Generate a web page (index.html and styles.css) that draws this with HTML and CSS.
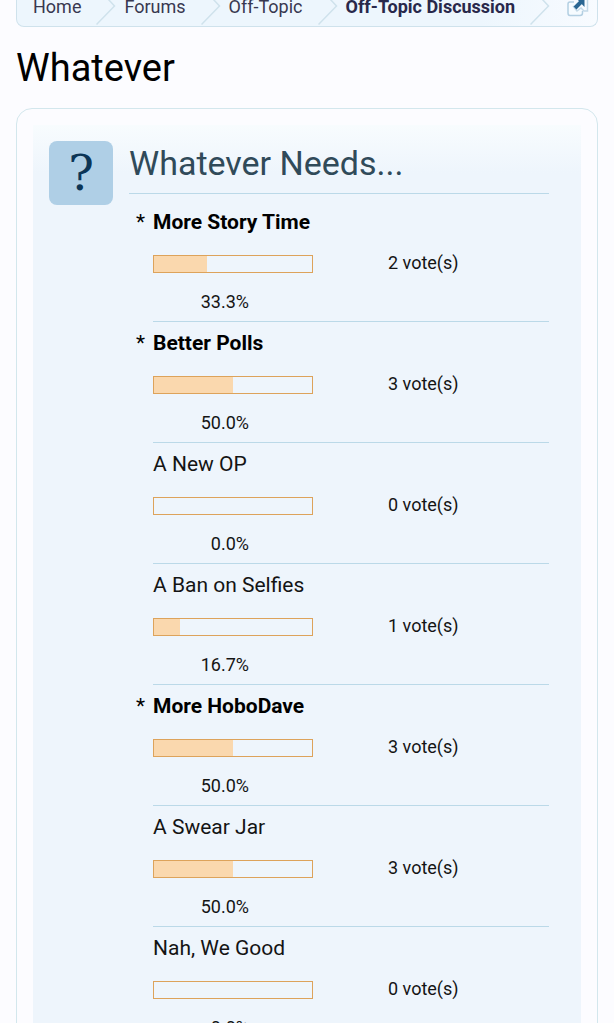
FILE: index.html
```html
<!DOCTYPE html>
<html lang="en">
  <head>
    <meta charset="UTF-8" />
    <meta name="viewport" content="width=device-width,initial-scale=1.0" />
    <title>Whatever</title>
    <link rel="stylesheet" href="styles.css">
  </head>
  <body>
    <nav class="breadcrumb" aria-label="Breadcrumb">
      <div class="crumb">
        <a href="#">Home</a>
        <svg class="arrow" width="20" height="26" viewBox="0 0 20 26"><path d="M12 -1 L18.500 6 L0.500 24.500" /></svg>
      </div>
      <div class="crumb">
        <a href="#">Forums</a>
        <svg class="arrow" width="20" height="26" viewBox="0 0 20 26"><path d="M12 -1 L18.500 6 L0.500 24.500" /></svg>
      </div>
      <div class="crumb">
        <a href="#">Off-Topic</a>
        <svg class="arrow" width="20" height="26" viewBox="0 0 20 26"><path d="M12 -1 L18.500 6 L0.500 24.500" /></svg>
      </div>
      <div class="crumb current">
        <a href="#">Off-Topic Discussion</a>
        <svg class="arrow" width="20" height="26" viewBox="0 0 20 26"><path d="M12 -1 L18.500 6 L0.500 24.500" /></svg>
      </div>
      <a class="jump" href="#" aria-label="Open quick navigation">
        <svg width="22" height="18" viewBox="0 0 22 18">
          <path d="M7 2 H3 Q1 2 1 4 V13 Q1 15.500 3 15.500 H13 Q15.500 15.500 15.500 13 V11" fill="#f6fbff" stroke="#b3cfe2" stroke-width="1.500" />
          <path d="M6 6 L10 11 L14 8 L17 11 H20.500 V-1" fill="none" stroke="#c3d9e8" stroke-width="1.500" />
          <path d="M8 8 L14 2" stroke="#2a6692" stroke-width="4" />
          <path d="M10 -1 H17.500 V7 Z" fill="#2a6692" />
        </svg>
      </a>
    </nav>

    <h1 class="page-title">Whatever</h1>

    <div class="poll-box">
      <div class="poll">
        <div class="question-mark">?</div>
        <div class="poll-content">
          <h2 class="question">Whatever Needs...</h2>
          <ol class="results">
            <li class="result voted">
              <h3 class="option">More Story Time</h3>
              <div class="bar"><span class="fill" style="width: 33.3%"></span></div>
              <div class="count">2 vote(s)</div>
              <div class="percent">33.3%</div>
            </li>
            <li class="result voted">
              <h3 class="option">Better Polls</h3>
              <div class="bar"><span class="fill" style="width: 50%"></span></div>
              <div class="count">3 vote(s)</div>
              <div class="percent">50.0%</div>
            </li>
            <li class="result">
              <h3 class="option">A New OP</h3>
              <div class="bar"></div>
              <div class="count">0 vote(s)</div>
              <div class="percent">0.0%</div>
            </li>
            <li class="result">
              <h3 class="option">A Ban on Selfies</h3>
              <div class="bar"><span class="fill" style="width: 16.7%"></span></div>
              <div class="count">1 vote(s)</div>
              <div class="percent">16.7%</div>
            </li>
            <li class="result voted">
              <h3 class="option">More HoboDave</h3>
              <div class="bar"><span class="fill" style="width: 50%"></span></div>
              <div class="count">3 vote(s)</div>
              <div class="percent">50.0%</div>
            </li>
            <li class="result">
              <h3 class="option">A Swear Jar</h3>
              <div class="bar"><span class="fill" style="width: 50%"></span></div>
              <div class="count">3 vote(s)</div>
              <div class="percent">50.0%</div>
            </li>
            <li class="result">
              <h3 class="option">Nah, We Good</h3>
              <div class="bar"></div>
              <div class="count">0 vote(s)</div>
              <div class="percent">0.0%</div>
            </li>
          </ol>
        </div>
      </div>
    </div>
  </body>
</html>
```
FILE: styles.css
```css
body {
  margin: 0;
  padding: 0 16px;
  background-color: #fcfcff;
  color: #141414;
  font-family: Roboto, Arial, sans-serif;
}
h1,
h2,
h3,
ol {
  margin: 0;
  padding: 0;
  font-weight: normal;
}
a {
  color: inherit;
  text-decoration: none;
}
.breadcrumb {
  display: flex;
  height: 26px;
  padding: 0 8px 0 16px;
  border: 1px solid #cfe2ec;
  border-top: 0;
  border-radius: 0 0 8px 8px;
  background: linear-gradient(to right, #edf6fd 80%, #f8fbff);
  color: #383850;
  font-size: 18px;
  line-height: 14px;
  overflow: hidden;
}
.crumb {
  display: flex;
  gap: 15px;
  margin-right: 8px;
  white-space: nowrap;
}
.current {
  color: #28284b;
  font-weight: bold;
}
.arrow {
  fill: none;
  stroke: #cfe2ec;
  stroke-width: 1.500;
}
.jump {
  margin-left: auto;
}
.jump svg {
  display: block;
}
.page-title {
  padding: 19px 0 18px;
  color: #000;
  font-size: 38px;
  line-height: 44px;
}
.poll-box {
  padding: 16px;
  border: 1px solid #d3e7ed;
  border-radius: 16px;
}
.poll {
  display: flex;
  gap: 16px;
  padding: 16px 32px 16px 16px;
  background: linear-gradient(to bottom, #f8fcfe, #eef5fc 48px);
}
.question-mark {
  flex: none;
  width: 64px;
  height: 64px;
  border-radius: 8px;
  background-color: #afcfe6;
  color: #0c3556;
  font-family: "DejaVu Serif", serif;
  font-size: 48px;
  line-height: 64px;
  text-align: center;
}
.poll-content {
  flex: 1;
}
.question {
  padding-bottom: 8px;
  border-bottom: 1px solid #bbd9e8;
  color: #304a59;
  font-size: 34px;
  line-height: 44px;
}
.results {
  padding: 7px 0 0 24px;
  list-style: none;
}
.result {
  display: grid;
  grid-template-columns: 160px 1fr;
  grid-template-rows: 42px 42px 36px;
  column-gap: 75px;
  align-items: center;
  border-bottom: 1px solid #bbd9e8;
  font-size: 18px;
}
.option {
  grid-column: 1 / 3;
  font-size: 21px;
}
.voted .option {
  color: #000;
  font-weight: bold;
}
/* marks the options this member voted for */
.voted .option::before {
  content: "*";
  display: inline-block;
  width: 17px;
  margin-left: -17px;
  font-weight: normal;
}
.bar {
  box-sizing: border-box;
  height: 18px;
  border: 1px solid #dda35b;
}
.fill {
  display: block;
  height: 100%;
  background-color: #fad8ae;
}
.count,
.percent {
  padding-bottom: 4px;
}
.percent {
  width: 60%;
  text-align: right;
}
```
